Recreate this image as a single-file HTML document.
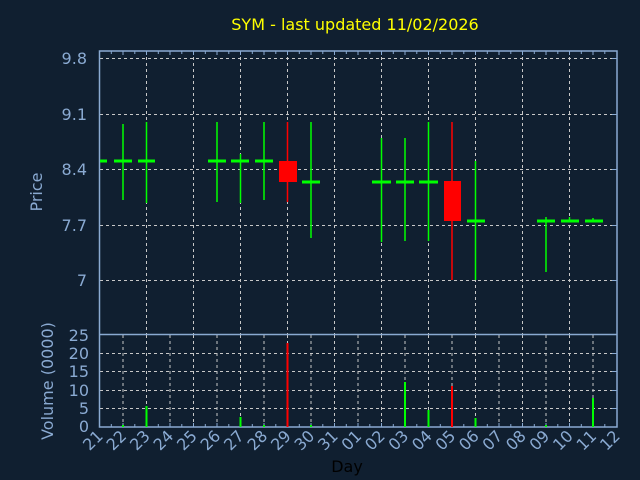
<!DOCTYPE html><html><head><style>body{margin:0;background:#101f30}svg{display:block}</style></head><body>
<svg width="640" height="480" xmlns="http://www.w3.org/2000/svg" font-family="DejaVu Sans, Liberation Sans, sans-serif">
<rect width="640" height="480" fill="#101f30"/>
<text x="355" y="30" fill="#ffff00" font-size="16" text-anchor="middle">SYM - last updated 11/02/2026</text>
<g stroke="#c8c8c8" stroke-dasharray="3,3" stroke-width="1">
<path d="M100 58.5H617M100 114.5H617M100 169.5H617M100 225.5H617M100 280.5H617"/>
<path d="M146.5 51V334M193.5 51V334M240.5 51V334M287.5 51V334M334.5 51V334M381.5 51V334M428.5 51V334M475.5 51V334M522.5 51V334M569.5 51V334"/>
<path d="M100 353.5H617M100 371.5H617M100 390.5H617M100 408.5H617"/>
<path d="M123 335V427M146.5 335V427M170 335V427M193.5 335V427M217 335V427M240.5 335V427M264 335V427M287.5 335V427M311 335V427M334.5 335V427M358 335V427M381.5 335V427M405 335V427M428.5 335V427M452 335V427M475.5 335V427M499 335V427M522.5 335V427M546 335V427M569.5 335V427M593 335V427"/>
</g>
<g stroke="#8aaad2" stroke-width="1.5" fill="none">
<rect x="99.5" y="51" width="517.5" height="376"/>
<path d="M99.5 334.5H617"/>
</g>
<g stroke="#8aaad2" stroke-width="1">
<path d="M111.3 51v3M123 51v4M134.8 51v3M146.5 51v4M158.3 51v3M170 51v4M181.8 51v3M193.5 51v4M205.3 51v3M217 51v4M228.8 51v3M240.5 51v4M252.3 51v3M264 51v4M275.8 51v3M287.5 51v4M299.3 51v3M311 51v4M322.8 51v3M334.5 51v4M346.3 51v3M358 51v4M369.8 51v3M381.5 51v4M393.3 51v3M405 51v4M416.8 51v3M428.5 51v4M440.3 51v3M452 51v4M463.8 51v3M475.5 51v4M487.3 51v3M499 51v4M510.8 51v3M522.5 51v4M534.3 51v3M546 51v4M557.8 51v3M569.5 51v4M581.3 51v3M593 51v4M604.8 51v3"/>
<path d="M111.3 427v-3M123 427v-4M134.8 427v-3M146.5 427v-4M158.3 427v-3M170 427v-4M181.8 427v-3M193.5 427v-4M205.3 427v-3M217 427v-4M228.8 427v-3M240.5 427v-4M252.3 427v-3M264 427v-4M275.8 427v-3M287.5 427v-4M299.3 427v-3M311 427v-4M322.8 427v-3M334.5 427v-4M346.3 427v-3M358 427v-4M369.8 427v-3M381.5 427v-4M393.3 427v-3M405 427v-4M416.8 427v-3M428.5 427v-4M440.3 427v-3M452 427v-4M463.8 427v-3M475.5 427v-4M487.3 427v-3M499 427v-4M510.8 427v-3M522.5 427v-4M534.3 427v-3M546 427v-4M557.8 427v-3M569.5 427v-4M581.3 427v-3M593 427v-4M604.8 427v-3"/>
<path d="M612 58.5h5M612 114.5h5M612 169.5h5M612 225.5h5M612 280.5h5M612 353.5h5M612 371.5h5M612 390.5h5M612 408.5h5"/>
</g>
<g fill="#8aaad2" font-size="16" text-anchor="end">
<text x="87" y="64">9.8</text><text x="87" y="120">9.1</text><text x="87" y="175">8.4</text><text x="87" y="231">7.7</text><text x="87" y="286">7</text>
<text x="89" y="341">25</text><text x="89" y="359">20</text><text x="89" y="377">15</text><text x="89" y="396">10</text><text x="89" y="414">5</text><text x="89" y="432">0</text>
</g>
<text transform="translate(42,192) rotate(-90)" fill="#8aaad2" font-size="16" text-anchor="middle">Price</text>
<text transform="translate(53,381) rotate(-90)" fill="#8aaad2" font-size="16" text-anchor="middle">Volume (0000)</text>
<g fill="#8aaad2" font-size="16" text-anchor="end">
<text transform="translate(104,437) rotate(-45)">21</text><text transform="translate(127.5,437) rotate(-45)">22</text><text transform="translate(151,437) rotate(-45)">23</text><text transform="translate(174.5,437) rotate(-45)">24</text><text transform="translate(198,437) rotate(-45)">25</text><text transform="translate(221.5,437) rotate(-45)">26</text><text transform="translate(245,437) rotate(-45)">27</text><text transform="translate(268.5,437) rotate(-45)">28</text><text transform="translate(292,437) rotate(-45)">29</text><text transform="translate(315.5,437) rotate(-45)">30</text><text transform="translate(339,437) rotate(-45)">31</text><text transform="translate(362.5,437) rotate(-45)">01</text><text transform="translate(386,437) rotate(-45)">02</text><text transform="translate(409.5,437) rotate(-45)">03</text><text transform="translate(433,437) rotate(-45)">04</text><text transform="translate(456.5,437) rotate(-45)">05</text><text transform="translate(480,437) rotate(-45)">06</text><text transform="translate(503.5,437) rotate(-45)">07</text><text transform="translate(527,437) rotate(-45)">08</text><text transform="translate(550.5,437) rotate(-45)">09</text><text transform="translate(574,437) rotate(-45)">10</text><text transform="translate(597.5,437) rotate(-45)">11</text><text transform="translate(621,437) rotate(-45)">12</text>
</g>
<text x="347" y="472" fill="#000" font-size="16" text-anchor="middle">Day</text>
<g stroke="#00ff00" stroke-width="1.5">
<path d="M123 124V200M146.5 122V203M217 122V202M240.5 154V203M264 122V200M311 122V238M381.5 138V242M405 138V241M428.5 122V241M475.5 161V280M546 217V272M569.5 217V221M593 218V221"/>
</g>
<g stroke="#00ff00" stroke-width="3">
<path d="M100 161H107M114 161H132M138 161H155M208 161H226M231 161H249M255 161H273M302 182H320M372 182H391M396 182H414M419 182H438M467 221H485M537 221H555M561 221H579M585 221H603"/>
</g>
<g stroke="#ff0000" stroke-width="1.5"><path d="M287.5 122V202M452 122V280"/></g>
<rect x="279" y="161" width="18" height="21" fill="#ff0000"/>
<rect x="444" y="181" width="17" height="40" fill="#ff0000"/>
<g stroke="#00ff00" stroke-width="2">
<path d="M123 427V425M146.5 427V406M240.5 427V417M264 427V425M311 427V425M405 427V382M428.5 427V410M475.5 427V418M546 427V425M593 427V398"/>
</g>
<g stroke="#ff0000" stroke-width="2"><path d="M287.5 427V343M452 427V386"/></g>
</svg>
</body></html>
